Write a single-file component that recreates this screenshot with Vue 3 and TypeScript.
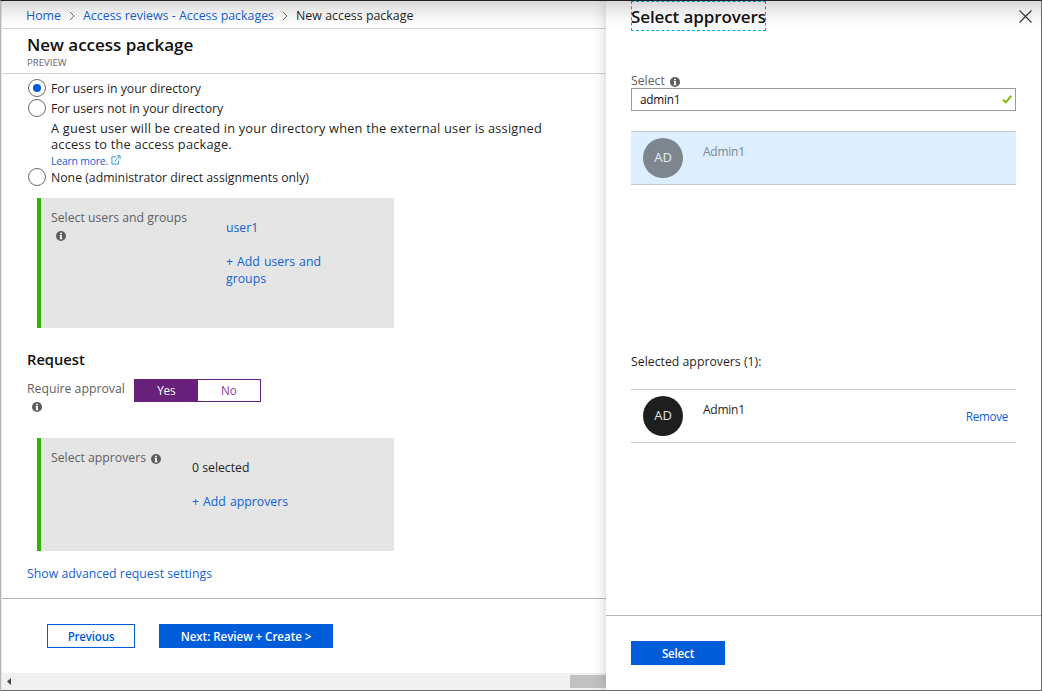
<script setup lang="ts">
import { ref } from 'vue'

interface AudienceOption {
  id: string
  label: string
}

const directory: AudienceOption[] = [
  { id: 'in', label: 'For users in your directory' },
  { id: 'out', label: 'For users not in your directory' },
]
const audience = ref('in')
const approval = ref(true)
const query = ref('admin1')
</script>

<template>
  <div class="window">
    <main class="blade">
      <nav class="crumbs">
        <a>Home</a>
        <svg class="chev" viewBox="0 0 6 10"><path d="M1 1l4 4-4 4" /></svg>
        <a>Access reviews - Access packages</a>
        <svg class="chev" viewBox="0 0 6 10"><path d="M1 1l4 4-4 4" /></svg>
        <span>New access package</span>
      </nav>
      <header class="head">
        <h1>New access package</h1>
        <small>PREVIEW</small>
      </header>

      <section class="content">
        <div v-for="o in directory" :key="o.id" class="option" @click="audience = o.id">
          <i class="radio" :class="{ on: audience === o.id }"></i><span>{{ o.label }}</span>
        </div>
        <p class="note">A guest user will be created in your directory when the external user is assigned<br />access to the access package.</p>
        <a class="learn"><span>Learn more.</span>
          <svg viewBox="0 0 10 10"><path d="M5 1.9H.9V9.1H7.6V5.4M3.4 6.6L8.6 1.2M5.7.8H9.1V4.2" /></svg>
        </a>
        <div class="option none" @click="audience = 'none'">
          <i class="radio" :class="{ on: audience === 'none' }"></i><span>None (administrator direct assignments only)</span>
        </div>

        <div class="card users">
          <div class="card-label">
            <span>Select users and groups</span>
            <svg class="info below" viewBox="0 0 10 10"><circle cx="5" cy="5" r="5" /><path d="M4.1 1.7h1.8v1.5H4.1zM3.6 4h2.3v3.4h.6v.9H3.5v-.9h.6V4.9h-.5z" /></svg>
          </div>
          <div class="card-value">
            <a>user1</a>
            <a class="add">+ Add users and<br />groups</a>
          </div>
        </div>

        <h2>Request</h2>
        <div class="approval">
          <div class="approval-label">
            <span>Require approval</span>
            <svg class="info below" viewBox="0 0 10 10"><circle cx="5" cy="5" r="5" /><path d="M4.1 1.7h1.8v1.5H4.1zM3.6 4h2.3v3.4h.6v.9H3.5v-.9h.6V4.9h-.5z" /></svg>
          </div>
          <div class="toggle">
            <span :class="{ active: approval }" @click="approval = true">Yes</span>
            <span :class="{ active: !approval }" @click="approval = false">No</span>
          </div>
        </div>

        <div class="card approvers">
          <div class="card-label row">
            <span>Select approvers</span>
            <svg class="info" viewBox="0 0 10 10"><circle cx="5" cy="5" r="5" /><path d="M4.1 1.7h1.8v1.5H4.1zM3.6 4h2.3v3.4h.6v.9H3.5v-.9h.6V4.9h-.5z" /></svg>
          </div>
          <div class="card-value">
            <span>0 selected</span>
            <a class="add">+ Add approvers</a>
          </div>
        </div>
        <a class="advanced">Show advanced request settings</a>
      </section>

      <footer class="actions">
        <button class="btn ghost">Previous</button>
        <button class="btn next">Next: Review + Create &gt;</button>
      </footer>
      <div class="scrollbar">
        <svg viewBox="0 0 4 7"><path d="M4 0v7L0 3.5z" /></svg>
        <div class="thumb"></div>
      </div>
    </main>

    <aside class="panel">
      <div class="panel-head">
        <h1 class="panel-title">Select approvers</h1>
        <svg class="close" viewBox="0 0 13 13"><path d="M.5.5l12 12M12.5.5l-12 12" /></svg>
      </div>
      <div class="panel-body">
        <div class="field-label">
          <span>Select</span>
          <svg class="info" viewBox="0 0 10 10"><circle cx="5" cy="5" r="5" /><path d="M4.1 1.7h1.8v1.5H4.1zM3.6 4h2.3v3.4h.6v.9H3.5v-.9h.6V4.9h-.5z" /></svg>
        </div>
        <div class="field">
          <span>{{ query }}</span>
          <svg viewBox="0 0 10 9"><path d="M.8 4.8L3.8 7.4 9.2.9" /></svg>
        </div>
        <div class="person picked">
          <div class="avatar">AD</div>
          <span class="name">Admin1</span>
        </div>
        <p class="selected">Selected approvers (1):</p>
        <div class="person">
          <div class="avatar">AD</div>
          <span class="name">Admin1</span>
          <a class="remove">Remove</a>
        </div>
      </div>
      <footer class="panel-foot">
        <button class="btn pick">Select</button>
      </footer>
    </aside>
    <div class="topshade"></div>
  </div>
</template>

<style>
body {
  margin: 0;
}
</style>

<style scoped>
* {
  box-sizing: border-box;
}
.window {
  position: relative;
  display: flex;
  width: 1042px;
  height: 691px;
  overflow: hidden;
  border: 1px solid #6b6b6b;
  border-top-color: #231f20;
  border-left-color: #b5b5b5;
  background: #fff;
  color: #1f1f1f;
  font: 12.25px/16px "Open Sans", "Noto Sans", sans-serif;
}
.window::before {
  content: "";
  position: absolute;
  left: -1px;
  top: 0;
  width: 1px;
  height: 189px;
  background: #231f20;
}
.topshade {
  position: absolute;
  inset: 0 0 auto 0;
  height: 27px;
  background: linear-gradient(rgba(40, 30, 40, 0.18), rgba(40, 30, 40, 0.09) 35%, rgba(40, 30, 40, 0.02) 75%, transparent);
  pointer-events: none;
}
h1, h2, p {
  margin: 0;
}
span, a, h1, h2, p {
  white-space: nowrap;
}
a {
  color: #0f62d9;
}
.blade {
  display: flex;
  flex-direction: column;
  flex: none;
  width: 605px;
  border-left: 1px solid #e4e4e4;
}
.crumbs {
  display: flex;
  align-items: center;
  height: 28px;
  padding: 3px 0 0 24px;
  border-bottom: 1px solid #d2d2d2;
  font-size: 12.4px;
}
.chev {
  width: 6px;
  height: 10px;
  margin: -1px 8px 0 8px;
  fill: none;
  stroke: #666;
}
.head {
  height: 45px;
  padding: 5px 0 0 25px;
  border-bottom: 1px solid #d2d2d2;
}
h1 {
  font-size: 17px;
  line-height: 22px;
  font-weight: 600;
  letter-spacing: -0.02px;
  color: #111;
}
small {
  display: block;
  padding-top: 1px;
  font-size: 9.6px;
  line-height: 12px;
  color: #666;
}
.content {
  display: flex;
  flex-direction: column;
  height: 524px;
  padding: 4px 0 0 25px;
}
.option {
  display: flex;
  align-items: center;
  gap: 5px;
  height: 20px;
  letter-spacing: -0.02px;
}
.option span {
  padding-top: 2px;
}
.radio {
  display: grid;
  place-items: center;
  width: 18px;
  height: 18px;
  margin-left: 1px;
  border: 1px solid #6a6a6a;
  border-radius: 50%;
}
.radio.on::after {
  content: "";
  width: 8px;
  height: 8px;
  border-radius: 50%;
  background: #015cda;
}
.note {
  margin: 2px 0 1px 24px;
  font-size: 12.8px;
  letter-spacing: 0.2px;
}
.learn {
  display: flex;
  align-items: center;
  gap: 3px;
  margin-left: 24px;
  font-size: 10.4px;
  letter-spacing: -0.18px;
}
.learn svg {
  width: 10px;
  height: 10px;
  margin-top: -2px;
  fill: none;
  stroke: #3a9cd0;
}
.option.none {
  margin-top: -2px;
  letter-spacing: 0.01px;
}
.card {
  display: flex;
  flex: none;
  width: 357px;
  margin-left: 10px;
  padding: 11px 0 0 10px;
  border-left: 4px solid #2fb400;
  background: #e5e5e5;
}
.users {
  height: 130px;
  margin-top: 11px;
}
.approvers {
  height: 113px;
  margin-top: 25px;
}
.card-label, .approval-label, .field-label {
  color: #5f5f5f;
}
.card-label {
  padding-top: 1px;
}
.users .card-label {
  width: 175px;
}
.approvers .card-label {
  width: 141px;
}
.row {
  display: flex;
  align-items: flex-start;
  gap: 5px;
}
.row .info {
  margin-top: 4px;
}
.info {
  display: block;
  flex: none;
  width: 10px;
  height: 10px;
}
.info circle {
  fill: #5c5c5c;
}
.info path {
  fill: #fff;
}
.below {
  margin: 5px 0 0 5px;
}
.card-value {
  display: flex;
  flex-direction: column;
  gap: 17px;
  padding-top: 10px;
  line-height: 17px;
}
.add {
  letter-spacing: 0.03px;
  word-spacing: 0.8px;
}
h2 {
  margin-top: 21px;
  font-size: 14.7px;
  line-height: 20px;
  font-weight: 600;
  color: #111;
}
.approval {
  display: flex;
  height: 34px;
  margin-top: 10px;
}
.approval-label {
  width: 107px;
  padding-top: 2px;
}
.toggle {
  display: flex;
  width: 127px;
  height: 23px;
  border: 1px solid #68217a;
  color: #8a3f9f;
  font-size: 11.7px;
  letter-spacing: -0.2px;
}
.toggle span {
  flex: 1;
  line-height: 20px;
  text-align: center;
}
.toggle .active {
  background: #68217a;
  color: #fff;
}
.advanced {
  margin-top: 15px;
  letter-spacing: 0.03px;
}
.actions {
  display: flex;
  gap: 24px;
  height: 75px;
  padding: 25px 0 0 45px;
  border-top: 1px solid #b5b5b5;
}
.btn {
  height: 24px;
  padding: 1px 0 0;
  border: 1px solid #015cda;
  background: #015cda;
  color: #fff;
  font: 600 11.6px/21px "Open Sans", "Noto Sans", sans-serif;
  letter-spacing: -0.05px;
  white-space: nowrap;
}
.ghost {
  width: 88px;
  background: #fff;
  color: #015cda;
  letter-spacing: -0.2px;
}
.next {
  width: 174px;
}
.scrollbar {
  display: flex;
  align-items: center;
  justify-content: space-between;
  height: 17px;
  padding-left: 5px;
  background: #f0f0f0;
}
.scrollbar svg {
  width: 4px;
  height: 7px;
  fill: #444;
}
.thumb {
  width: 36px;
  height: 13px;
  background: #c1c1c1;
}
.panel {
  position: relative;
  display: flex;
  flex-direction: column;
  flex: 1;
  background: #fff;
  box-shadow: 0 0 13px rgba(0, 0, 0, 0.2);
}
.panel-head {
  display: flex;
  justify-content: space-between;
  height: 72px;
  padding: 0 9px 0 25px;
}
.panel-title {
  width: 135px;
  height: 30px;
  border: 1px dashed #00abec;
  line-height: 30px;
  text-indent: -1px;
  letter-spacing: -0.1px;
}
.close {
  width: 13px;
  height: 13px;
  margin-top: 9px;
  stroke: #333;
  stroke-width: 1.1;
}
.panel-body {
  flex: 1;
  padding: 0 25px;
}
.field-label {
  display: flex;
  gap: 5px;
  height: 15px;
}
.field-label .info {
  margin-top: 4px;
}
.field {
  display: flex;
  align-items: center;
  justify-content: space-between;
  height: 23px;
  padding: 0 3px 0 8px;
  border: 1px solid #999;
  color: #111;
  font-size: 11.8px;
  letter-spacing: -0.25px;
}
.field span {
  padding-bottom: 1px;
}
.field svg {
  width: 10px;
  height: 9px;
  fill: none;
  stroke: #7fba00;
  stroke-width: 2;
}
.person {
  display: flex;
  height: 54px;
  padding: 6px 8px 0 12px;
  border: 1px solid #c6c6c6;
  border-width: 1px 0;
}
.picked {
  margin-top: 20px;
  background: #dceeff;
}
.avatar {
  width: 40px;
  height: 40px;
  border-radius: 50%;
  background: #1e1e1e;
  color: #e4e4e4;
  font-size: 13px;
  line-height: 39px;
  text-align: center;
}
.picked .avatar {
  background: #7d868d;
  color: #e2eef8;
}
.name {
  flex: 1;
  margin: 6px 0 0 20px;
  font-size: 12px;
  letter-spacing: -0.25px;
}
.picked .name {
  color: #7d8790;
}
.remove {
  margin-top: 12px;
  font-size: 11.7px;
  letter-spacing: -0.3px;
}
.selected {
  margin: 169px 0 19px;
  letter-spacing: 0.02px;
}
.panel-foot {
  height: 75px;
  padding: 25px;
  border-top: 1px solid #b5b5b5;
}
.pick {
  display: block;
  width: 94px;
  letter-spacing: -0.2px;
}
</style>
